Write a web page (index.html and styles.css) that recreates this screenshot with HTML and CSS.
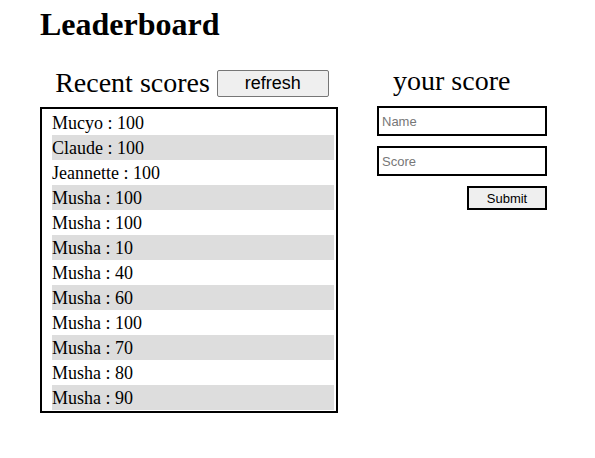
FILE: index.html
```html
<!DOCTYPE html>
<html>
<head>
<meta charset="utf-8">
<link rel="stylesheet" href="styles.css">
</head>
<body>
<div class="page">
  <h1 class="title">Leaderboard</h1>
  <div class="columns">
    <section class="recent">
      <div class="recent-head">
        <h2 class="sub">Recent scores</h2>
        <button class="refresh">refresh</button>
      </div>
      <div class="board">
        <div class="row">Mucyo : 100</div>
        <div class="row">Claude : 100</div>
        <div class="row">Jeannette : 100</div>
        <div class="row">Musha : 100</div>
        <div class="row">Musha : 100</div>
        <div class="row">Musha : 10</div>
        <div class="row">Musha : 40</div>
        <div class="row">Musha : 60</div>
        <div class="row">Musha : 100</div>
        <div class="row">Musha : 70</div>
        <div class="row">Musha : 80</div>
        <div class="row">Musha : 90</div>
      </div>
    </section>
    <section class="yours">
      <h2 class="sub sub-right">your score</h2>
      <form class="form">
        <input class="field" type="text" placeholder="Name">
        <input class="field" type="text" placeholder="Score">
        <button class="submit" type="button">Submit</button>
      </form>
    </section>
  </div>
</div>
</body>
</html>
```
FILE: styles.css
```css
html, body { margin: 0; padding: 0; background: #fff; }
body { font-family: "Liberation Serif", "Times New Roman", serif; color: #000; }
.page { padding: 0 0 0 40px; }
.title { margin: 0; padding-top: 7px; font-size: 32px; font-weight: bold; line-height: 35px; }
.columns { display: flex; align-items: flex-start; margin-top: 23px; }
.recent { width: 298px; }
.recent-head { display: flex; align-items: center; justify-content: center; gap: 7px; height: 35px; margin: 0 0 7px 6px; }
.sub { margin: 0; font-size: 28px; font-weight: normal; line-height: 32px; }
.refresh { width: 112px; height: 27px; font-family: "Liberation Sans", Arial, sans-serif; font-size: 18px; background: #efefef; border: 1px solid #767676; border-radius: 2px; padding: 0; margin-top: 1px; color: #000; }
.board { border: 2px solid #000; padding: 1px 2px 1px 10px; }
.row { height: 25px; line-height: 26px; font-size: 18px; }
.row:nth-child(even) { background: #ddd; }
.yours { margin-left: 39px; display: flex; flex-direction: column; }
.sub-right { margin-left: 16px; height: 41px; line-height: 32px; padding-top: 0; box-sizing: border-box; }
.form { display: flex; flex-direction: column; align-items: flex-start; gap: 10px; margin-top: 0; }
.field { width: 170px; height: 30px; box-sizing: border-box; border: 2px solid #000; padding: 0 3px; font-family: "Liberation Sans", Arial, sans-serif; font-size: 13px; margin: 0; }
.field::placeholder { color: #777; }
.submit { align-self: flex-end; width: 80px; height: 24px; margin-right: 0; box-sizing: border-box; border: 2px solid #000; background: #efefef; font-family: "Liberation Sans", Arial, sans-serif; font-size: 13px; padding: 0; color: #000; }
```
